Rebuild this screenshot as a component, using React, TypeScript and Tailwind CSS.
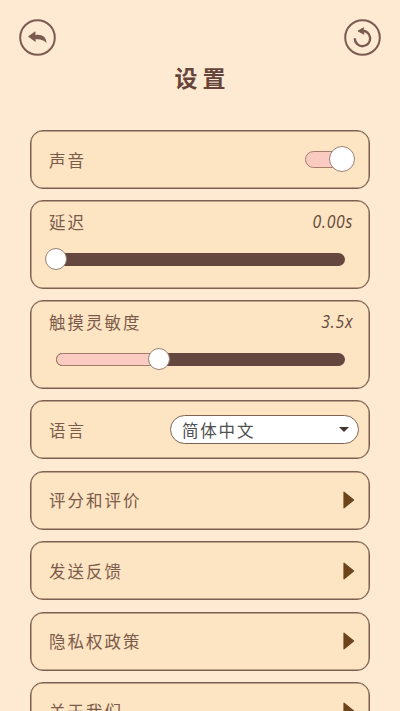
import React from 'react';

const label =
  "font-['Noto_Sans_CJK_SC',sans-serif] text-[16.5px] leading-[24px] tracking-[2px] font-normal whitespace-nowrap text-[#7a5b4a] -translate-y-[0.5px]";
const card =
  'shrink-0 rounded-[13px] border border-[#7d6050] shadow-[inset_0_0_0_0.5px_#7d6050] bg-[#fde4c3]';

function LinkRow({ text }: { text: string }) {
  return (
    <div className={`${card} flex h-[59px] items-center justify-between pl-[18px] pr-[14px]`}>
      <span className={label}>{text}</span>
      <svg width="12" height="18" viewBox="0 0 12 18">
        <path d="M1 1.2 10.6 9 1 16.8Z" fill="#6b441c" stroke="#6b441c" strokeWidth="1.2" strokeLinejoin="round" />
      </svg>
    </div>
  );
}

function SliderCard({ text, value, percent }: { text: string; value: string; percent: number }) {
  return (
    <div className={`${card} h-[88.6px] pl-[18px] pr-[16px] pt-[9px]`}>
      <div className="flex h-[24px] items-center justify-between">
        <span className={label}>{text}</span>
        <span className="origin-right -translate-y-px scale-x-[0.88] font-['Open_Sans',sans-serif] text-[18px] italic leading-[24px] tracking-[0.8px] text-[#65493a]">
          {value}
        </span>
      </div>
      <div className="relative ml-[7px] mr-[8px] mt-[18.5px] h-[13px] rounded-full bg-[#654740]">
        <div
          className={`h-full rounded-l-full bg-[#facbc0] ${percent > 0 ? 'border border-[#a37c6c]' : ''}`}
          style={{ width: `${percent}%` }}
        />
        <div
          className="absolute top-1/2 size-[22px] -translate-x-1/2 -translate-y-1/2 rounded-full border border-[#9a8074] bg-white"
          style={{ left: `${percent}%` }}
        />
      </div>
    </div>
  );
}

export default function App() {
  return (
    <div className="flex h-[711px] w-[400px] flex-col overflow-hidden bg-[#feead3]">
      <header className="flex h-[130px] shrink-0 flex-col">
        <div className="flex justify-between px-[19px] pt-[19px]">
          <svg width="37" height="37" viewBox="0 0 37 37" fill="none">
            <circle cx="18.5" cy="18.5" r="17.3" stroke="#7b5b50" strokeWidth="2" />
            <path
              d="M9 17.4 16.3 12.2Q17 14.6 16.2 15.9C22.5 14.8 27.5 17.5 27.5 24C24.6 20.8 21 19.8 16.4 20.3Q17 21.4 16.5 23Z"
              fill="#7b5b50"
            />
          </svg>
          <svg width="37" height="37" viewBox="0 0 37 37" fill="none">
            <circle cx="18.5" cy="18.5" r="17.3" stroke="#7b5b50" strokeWidth="2" />
            <path d="M10.8 20.2A7.7 7.7 0 1 0 18 11.8" stroke="#7b5b50" strokeWidth="2.4" strokeLinecap="round" />
            <path d="M14 12 19.6 8.8 18.8 12.1 20 15.2Z" fill="#7b5b50" stroke="#7b5b50" strokeLinejoin="round" />
          </svg>
        </div>
        <h1 className="mt-[4px] pl-[5px] text-center font-['Noto_Sans_CJK_SC',sans-serif] text-[23px] font-bold leading-[34px] tracking-[5px] text-[#65453a]">
          设置
        </h1>
      </header>
      <main className="flex flex-col gap-[11.4px] px-[30px]">
        <div className={`${card} flex h-[59px] items-center justify-between pl-[18px] pr-[14px]`}>
          <span className={label}>声音</span>
          <div className="relative h-[17px] w-[50px]">
            <div className="h-full w-[42px] rounded-full border border-[#a37c6c] bg-[#facbc0]" />
            <div className="absolute -top-[5px] right-0 size-[26px] rounded-full border border-[#9a8074] bg-white" />
          </div>
        </div>
        <SliderCard text="延迟" value="0.00s" percent={0} />
        <SliderCard text="触摸灵敏度" value="3.5x" percent={35.7} />
        <div className={`${card} flex h-[59px] items-center justify-between pl-[18px] pr-[10px]`}>
          <span className={label}>语言</span>
          <div className="flex h-[29px] w-[189px] items-center justify-between rounded-full border border-[#806453] bg-white pl-[11px] pr-[9px]">
            <span className="-translate-y-[0.5px] font-['Noto_Sans_CJK_SC',sans-serif] text-[16.5px] font-normal leading-[24px] tracking-[1.8px] text-[#505050]">
              简体中文
            </span>
            <svg width="10" height="5" viewBox="0 0 10 5">
              <path d="M0 0H10L5 5Z" fill="#42352f" />
            </svg>
          </div>
        </div>
        <LinkRow text="评分和评价" />
        <LinkRow text="发送反馈" />
        <LinkRow text="隐私权政策" />
        <LinkRow text="关于我们" />
      </main>
    </div>
  );
}
